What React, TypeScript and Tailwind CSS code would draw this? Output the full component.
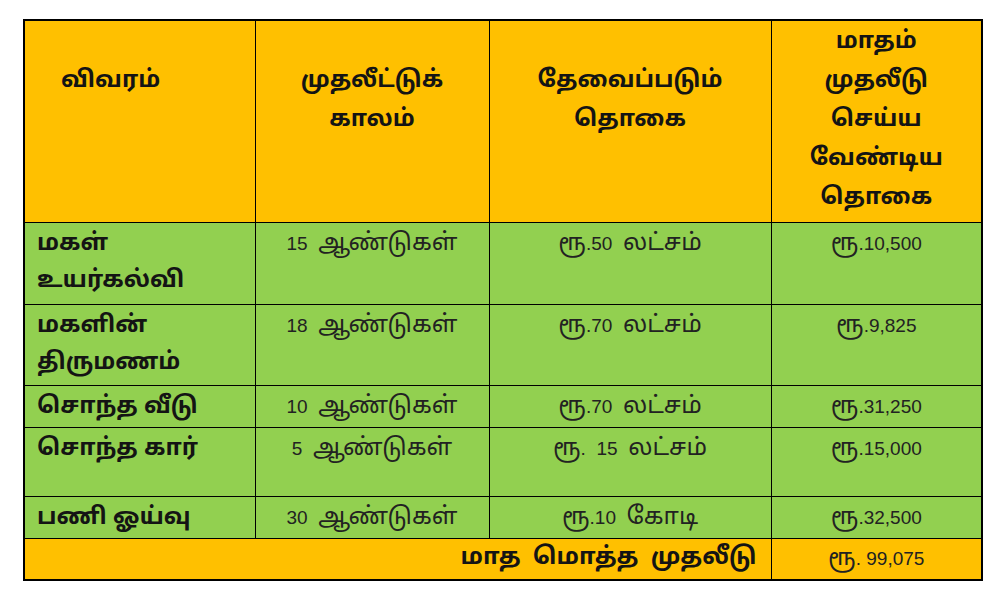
const TAMIL = "font-['Latha','Noto_Sans_Tamil','Lohit_Tamil','Liberation_Sans',sans-serif]";
const MIXED = "font-['Liberation_Sans','Noto_Sans_Tamil','Lohit_Tamil',sans-serif]";

type Row = {
  label: string[];
  period: string;
  amount: string;
  monthly: string;
  h: string;
};

const rows: Row[] = [
  { label: ["மகள்", "உயர்கல்வி"], period: "15  ஆண்டுகள்", amount: "ரூ.50  லட்சம்", monthly: "ரூ.10,500", h: "h-[82px]" },
  { label: ["மகளின்", "திருமணம்"], period: "18  ஆண்டுகள்", amount: "ரூ.70  லட்சம்", monthly: "ரூ.9,825", h: "h-[81px]" },
  { label: ["சொந்த வீடு"], period: "10  ஆண்டுகள்", amount: "ரூ.70  லட்சம்", monthly: "ரூ.31,250", h: "h-[42px]" },
  { label: ["சொந்த கார்"], period: "5  ஆண்டுகள்", amount: "ரூ.  15  லட்சம்", monthly: "ரூ.15,000", h: "h-[69px]" },
  { label: ["பணி ஓய்வு"], period: "30  ஆண்டுகள்", amount: "ரூ.10  கோடி", monthly: "ரூ.32,500", h: "h-[42px]" },
];

// tamil runs are set larger than the arial digits, like in the original sheet
function Mixed({ text }: { text: string }) {
  const parts = text.split(/([\u0B80-\u0BFF]+)/);
  return (
    <>
      {parts.map((p, i) =>
        /[\u0B80-\u0BFF]/.test(p) ? (
          <span key={i} className={`${TAMIL} text-[24px]`}>
            {p}
          </span>
        ) : (
          <span key={i}>{p}</span>
        ),
      )}
    </>
  );
}

const cell = "border border-black align-top";

export default function App() {
  return (
    <div className={`min-h-[608px] w-[997px] bg-white pl-[23px] pt-[19px] ${TAMIL} text-[#141414]`}>
      <table className="w-[958px] table-fixed border-collapse border-2 border-black">
        <colgroup>
          <col className="w-[231px]" />
          <col className="w-[234px]" />
          <col className="w-[282px]" />
          <col className="w-[211px]" />
        </colgroup>
        <thead>
          <tr className="h-[202px] bg-[#ffc000] text-[23.5px] font-bold leading-[39px]">
            <th className={`${cell} pl-[36px] pt-[41px] text-left font-bold`}>விவரம்</th>
            <th className={`${cell} pt-[41px] text-center font-bold`}>
              முதலீட்டுக்
              <br />
              காலம்
            </th>
            <th className={`${cell} pt-[41px] text-center font-bold`}>
              தேவைப்படும்
              <br />
              தொகை
            </th>
            <th className={`${cell} pt-[2px] text-center font-bold`}>
              மாதம்
              <br />
              முதலீடு
              <br />
              செய்ய
              <br />
              வேண்டிய
              <br />
              தொகை
            </th>
          </tr>
        </thead>
        <tbody>
          {rows.map((r) => (
            <tr key={r.monthly} className={`${r.h} bg-[#92d050]`}>
              <td className={`${cell} pl-[12px] pt-[3px] text-[23.5px] font-bold leading-[37px]`}>
                {r.label.map((l, i) => (
                  <div key={i}>{l}</div>
                ))}
              </td>
              <td className={`${cell} ${MIXED} pt-[2px] text-center text-[19px] leading-[37px] whitespace-pre text-[#222]`}>
                <Mixed text={r.period} />
              </td>
              <td className={`${cell} ${MIXED} pt-[2px] text-center text-[19px] leading-[37px] whitespace-pre text-[#222]`}>
                <Mixed text={r.amount} />
              </td>
              <td className={`${cell} ${MIXED} pt-[2px] text-center text-[19px] leading-[37px] text-[#222]`}>
                <Mixed text={r.monthly} />
              </td>
            </tr>
          ))}
          <tr className="h-[42px] bg-[#ffc000]">
            <td colSpan={3} className={`${cell} pr-[14px] pt-[1px] text-right text-[24px] font-bold leading-[37px] [word-spacing:6px]`}>
              மாத மொத்த முதலீடு
            </td>
            <td className={`${cell} ${MIXED} pt-[1px] text-center text-[19px] leading-[37px] whitespace-pre text-[#222]`}>
              <Mixed text="ரூ. 99,075" />
            </td>
          </tr>
        </tbody>
      </table>
    </div>
  );
}
